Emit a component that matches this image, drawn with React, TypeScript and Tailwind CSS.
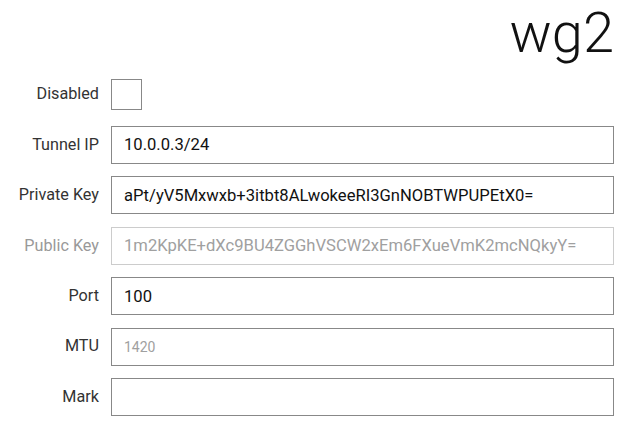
import { useState } from "react";

type Field = {
  label: string;
  value?: string;
  placeholder?: string;
  disabled?: boolean;
};

const fields: Field[] = [
  { label: "Tunnel IP", value: "10.0.0.3/24" },
  { label: "Private Key", value: "aPt/yV5Mxwxb+3itbt8ALwokeeRI3GnNOBTWPUPEtX0=" },
  { label: "Public Key", value: "1m2KpKE+dXc9BU4ZGGhVSCW2xEm6FXueVmK2mcNQkyY=", disabled: true },
  { label: "Port", value: "100" },
  { label: "MTU", placeholder: "1420" },
  { label: "Mark", value: "" },
];

function FieldRow({ field }: { field: Field }) {
  const [value, setValue] = useState(field.value ?? "");

  return (
    <>
      <label
        className={`text-right text-[16.2px] ${
          field.disabled ? "text-[#999999]" : "text-[#333333]"
        }`}
      >
        {field.label}
      </label>
      <input
        type="text"
        value={value}
        disabled={field.disabled}
        placeholder={field.placeholder}
        onChange={(e) => setValue(e.target.value)}
        className={`h-[38px] w-full border bg-white px-3 text-[16.6px] outline-none placeholder:text-[14px] placeholder:text-[#a0a0a0] ${
          field.disabled
            ? "border-[#cccccc] text-[#a0a0a0]"
            : "border-[#888888] text-[#111111]"
        }`}
      />
    </>
  );
}

export default function App() {
  const [disabled, setDisabled] = useState(false);

  return (
    <div
      className="min-h-screen bg-white pr-[13px]"
      style={{ fontFamily: "Roboto, 'Liberation Sans', sans-serif" }}
    >
      <h1 className="mb-[11.6px] pt-[2px] text-right text-[56px] font-light leading-[62px] text-[#111111]">
        wg2
      </h1>

      <div className="grid grid-cols-[99px_1fr] items-center gap-x-3 gap-y-[12.4px]">
        <label className="text-right text-[16.2px] text-[#333333]">Disabled</label>
        <div className="flex h-[38px] items-center">
          <button
            type="button"
            onClick={() => setDisabled(!disabled)}
            className="h-[31px] w-[31px] border border-[#888888] bg-white"
            aria-label="Disabled"
          >
            {disabled ? "✓" : null}
          </button>
        </div>

        {fields.map((f) => (
          <FieldRow key={f.label} field={f} />
        ))}
      </div>
    </div>
  );
}
